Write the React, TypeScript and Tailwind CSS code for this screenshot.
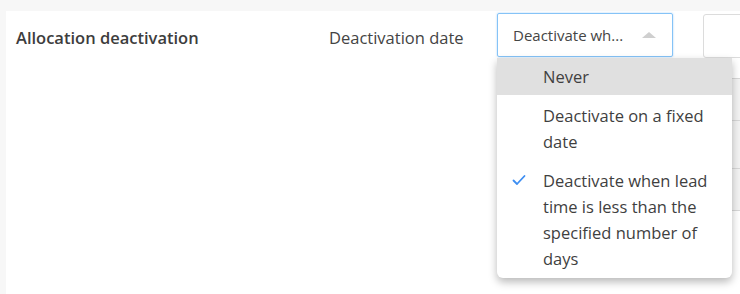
import React from "react";

const font = { fontFamily: '"Open Sans", "Noto Sans", Arial, sans-serif' };

export default function App() {
  return (
    <div
      className="w-[740px] h-[294px] overflow-hidden bg-[#f7f7f7] pt-[11px] pl-[6px]"
      style={font}
    >
      <div className="relative flex h-[283px] items-start bg-white text-[#404040]">
        <div className="w-[323px] shrink-0 pl-[10px] pt-[15px] text-[16.5px] font-semibold leading-[24px] text-[#3d3d3d]">
          Allocation deactivation
        </div>
        <div className="w-[168px] shrink-0 pt-[15px] text-[16.5px] leading-[24px] text-[#444]">
          Deactivation date
        </div>
        <div className="relative mt-[2px] shrink-0">
          <div className="flex h-[44px] w-[176px] items-center justify-between rounded-[2px] border border-[#85c3f7] pl-[15px] pr-[16px] shadow-[0_0_2px_rgba(80,160,240,0.5)]">
            <span className="text-[15px] text-[#454545]">Deactivate wh...</span>
            <span className="h-0 w-0 border-x-[7px] border-b-[6px] border-x-transparent border-b-[#cfcfcf]" />
          </div>
          <div className="absolute left-0 top-[45px] z-10 w-[235px] rounded-b-[6px] bg-white pb-[6px] text-[16.5px] leading-[26px] text-[#3f3f3f] shadow-[0_4px_9px_rgba(0,0,0,0.28)]">
            <div className="bg-[#e0e0e0] pl-[46px] pt-[6px] pb-[5px]">Never</div>
            <div className="pl-[46px] pr-[17px] pt-[8px] pb-[6px]">
              Deactivate on a fixed date
            </div>
            <div className="relative pl-[46px] pr-[17px] pt-[7px]">
              <svg
                className="absolute left-[15px] top-[13px]"
                width="14"
                height="12"
                viewBox="0 0 14 12"
                fill="none"
              >
                <path
                  d="M1.5 6.5 L5 10 L12.5 2"
                  stroke="#3d8ef2"
                  strokeWidth="1.8"
                  strokeLinecap="round"
                  strokeLinejoin="round"
                />
              </svg>
              Deactivate when lead time is less than the specified number of days
            </div>
          </div>
        </div>
        <div className="ml-[30px] flex shrink-0 flex-col">
          <div className="mt-[3px] h-[44px] w-[60px] rounded-[3px] border border-[#dcdcdc]" />
          <div className="mt-[20px] h-[42px] border-t border-[#d8d8d8] bg-[#f3f3f3]" />
          <div className="h-[48px] border-t border-[#d8d8d8] bg-[#f3f3f3]" />
          <div className="h-[42px] border-t border-[#d8d8d8] bg-[#f3f3f3]" />
          <div className="border-t border-[#d8d8d8]" />
        </div>
      </div>
    </div>
  );
}
